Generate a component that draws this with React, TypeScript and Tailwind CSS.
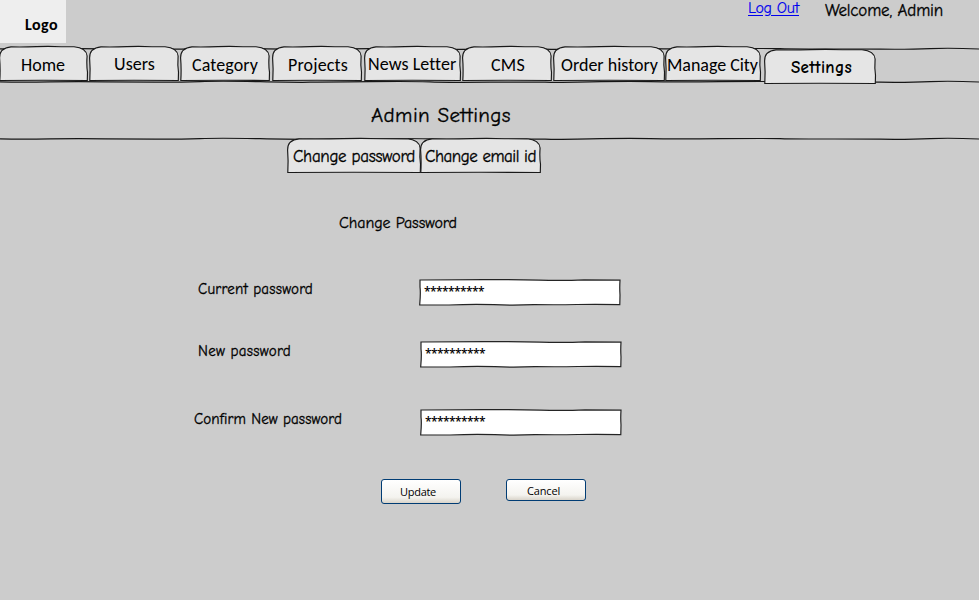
import { useLayoutEffect, useRef, useState } from "react";
import clsx from "clsx";

const tabFont = "font-[Calibri,Carlito,Lato,sans-serif]";
const handFont = "font-['Comic_Sans_MS','Comic_Neue',Lato,sans-serif]";
const inked = "[-webkit-text-stroke:0.3px_currentColor]";
const formFont = "font-[Tahoma,'Open_Sans',sans-serif]";

/** A single line of text whose tracking is adjusted to fill `width` pixels. */
function Label({ text, width, className }: { text: string; width: number; className?: string }) {
  const ref = useRef<HTMLSpanElement>(null);
  const [spacing, setSpacing] = useState(0);
  useLayoutEffect(() => {
    const el = ref.current;
    if (!el) return;
    el.style.letterSpacing = "0px";
    setSpacing((width - el.getBoundingClientRect().width) / text.length);
  }, [text, width]);
  return (
    <span
      ref={ref}
      className={clsx("relative block w-max whitespace-pre leading-5 [font-variant-ligatures:common-ligatures]", className)}
      style={{ letterSpacing: `${spacing}px` }}
    >
      {text}
    </span>
  );
}

/** Hand-drawn horizontal rule. */
function Rule({ className }: { className?: string }) {
  return (
    <svg className={clsx("pointer-events-none absolute left-0", className)} width="979" height="4" fill="none" stroke="#161616" strokeWidth="1.2">
      <path d="M0 1.9 Q25 2.4 50 1.8 Q80 1.5 105 1.8 T155 2.2 T200 1.6 T260 1.7 T310 2.2 T370 1.6 T430 1.9 T490 2.2 T545 2.2 T590 1.8 T650 1.6 T720 1.7 T780 1.7 T820 2 T880 2.2 T930 1.6 T979 2" />
    </svg>
  );
}

type TabProps = {
  text: string;
  w: number;
  textWidth: number;
  h?: number;
  className?: string;
  labelClass?: string;
};

function Tab({ text, w, textWidth, h = 35, className, labelClass }: TabProps) {
  const r = w - 0.5;
  const b = h - 0.5;
  return (
    <div className={clsx("relative h-[35px] shrink-0", className)} style={{ width: w }}>
      <svg className="absolute inset-0 overflow-visible" width={w} height={h} fill="#e5e5e5" stroke="#191919" strokeWidth="1.15">
        <path
          d={`M0.8 ${b} Q1.5 ${h * 0.65} 0.6 12 Q0.4 2 12 0.9 Q${w * 0.28} 1.2 ${w * 0.42} 0.6 T${w * 0.7} 0.7 L${w - 14} 0.8 Q${w - 1.6} 2 ${r - 0.4} 10 Q${w - 1.6} ${h * 0.55} ${r} ${h * 0.75} L${r - 0.2} ${b} Q${w * 0.5} ${b - 0.5} 0.8 ${b} Z`}
        />
      </svg>
      <Label text={text} width={textWidth} className={clsx(labelClass)} />
    </div>
  );
}

function PasswordBox({ className }: { className?: string }) {
  return (
    <div className={clsx("relative h-[27px] w-[202px] shrink-0", className)}>
      <svg className="absolute inset-0" width="202" height="27" fill="#fff" stroke="#242424" strokeWidth="1.2">
        <path d="M1 1 Q35 .7 65 .6 T120 1.1 T165 .8 L201 1.1 Q200.5 9 201 16 L200.8 25.6 Q178 25.1 158 25.5 T115 25.6 Q95 26.5 75 25.7 T30 26 L.7 25.8 Q1.8 14 1 8 Z" />
      </svg>
      <Label text="**********" width={60} className={clsx("left-[5px] top-[3px] text-[12px] font-semibold text-black", formFont)} />
    </div>
  );
}

function Field({ text, width, rowClass, boxClass }: { text: string; width: number; rowClass: string; boxClass: string }) {
  return (
    <div className={clsx("flex items-start", rowClass)}>
      <div className={clsx("shrink-0", boxClass)}>
        <Label text={text} width={width} className={clsx("left-px text-[15px]", handFont, inked)} />
      </div>
      <PasswordBox />
    </div>
  );
}

function Button({ text, width, className, labelClass }: { text: string; width: number; className: string; labelClass: string }) {
  return (
    <button
      type="button"
      className={clsx("flex w-[80px] items-start rounded-[3px] border border-[#003c74] bg-linear-to-b from-white via-[#f4f3ef] via-75% to-[#d9d4ca] text-left text-[11px] text-black", formFont, className)}
    >
      <Label text={text} width={width} className={labelClass} />
    </button>
  );
}

export default function App() {
  return (
    <main className="h-[600px] w-[979px] overflow-hidden bg-[#cccccc] text-black">
      <header className="flex h-[46px] items-start">
        <div className="h-[43px] w-[66px] bg-[#eeeeee]">
          <Label text="Logo" width={33} className={clsx("left-[25px] top-[15px] text-[16px] font-bold", tabFont)} />
        </div>
        <a href="#" className={clsx("ml-[682px] block text-[16px] text-[#0000ee] underline underline-offset-2", handFont)}>
          <Label text="Log Out" width={51} className="-top-[2px] [-webkit-text-stroke:0.15px_currentColor]" />
        </a>
        <Label text="Welcome, Admin" width={118} className={clsx("ml-[26px] top-px text-[17px]", handFont, inked)} />
      </header>

      <nav className={clsx("relative flex h-[39px] items-start text-[18px]", tabFont)}>
        <Rule className="top-px" />
        <Rule className="top-[34px]" />
        <Tab text="Home" w={89} textWidth={44} className="-ml-px" labelClass="left-[22px] top-[9px]" />
        <Tab text="Users" w={90} textWidth={41} className="ml-px" labelClass="left-[25px] top-[8px]" />
        <Tab text="Category" w={90} textWidth={66} className="ml-px" labelClass="left-[12px] top-[9px]" />
        <Tab text="Projects" w={90} textWidth={60} className="ml-[2px]" labelClass="left-[16px] top-[9px]" />
        <Tab text="News Letter" w={97} textWidth={88} className="ml-[2px]" labelClass="left-[4px] top-[8px]" />
        <Tab text="CMS" w={90} textWidth={34} className="ml-px" labelClass="left-[29px] top-[9px]" />
        <Tab text="Order history" w={112} textWidth={97} className="ml-px" labelClass="left-[8px] top-[9px]" />
        <Tab text="Manage City" w={96} textWidth={91} labelClass="left-[2px] top-[9px]" />
        <Tab text="Settings" w={112} textWidth={61} className="ml-[3px] mt-[3px]" labelClass={clsx("left-[27px] top-[9px] text-[17px] font-bold", handFont)} />
      </nav>

      <section className="relative h-[54px]">
        <Label text="Admin Settings" width={140} className={clsx("left-[371px] top-[20px] text-[21px]", handFont, inked)} />
        <Rule className="bottom-[-2px]" />
      </section>

      <div className={clsx("flex h-[61px] pl-[287px] text-[17px]", handFont, inked)}>
        <Tab text="Change password" w={134} textWidth={122} className="-mt-px" labelClass="left-[6px] top-[9px]" />
        <Tab text="Change email id" w={121} textWidth={111} className="-mt-px -ml-px" labelClass="left-[5px] top-[9px]" />
      </div>

      <form>
        <div className="h-[79px] pl-[339px] pt-[13px]">
          <Label text="Change Password" width={118} className={clsx("text-[16px]", handFont, inked)} />
        </div>
        <Field text="Current password" width={115} rowClass="h-[62px] pl-[197px]" boxClass="w-[222px]" />
        <Field text="New password" width={93} rowClass="h-[68px] pl-[197px]" boxClass="w-[223px]" />
        <Field text="Confirm New password" width={148} rowClass="h-[70px] pl-[193px]" boxClass="w-[227px]" />
        <div className="flex items-start gap-[45px] pl-[381px]">
          <Button text="Update" width={36} className="h-[25px]" labelClass="left-[18px] top-[2px]" />
          <Button text="Cancel" width={33} className="h-[22px]" labelClass="left-[20px] top-px" />
        </div>
      </form>
    </main>
  );
}
